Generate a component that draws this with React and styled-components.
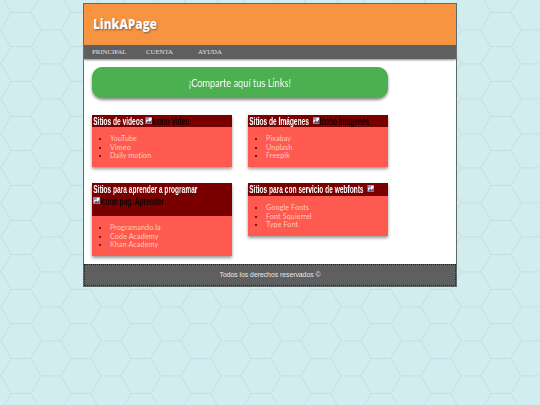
import React from "react";
import styled, { createGlobalStyle } from "styled-components";

const tile = `<svg xmlns='http://www.w3.org/2000/svg' width='60' height='34.64' viewBox='0 0 60 34.64'><g fill='none' stroke='#bfdbdf' stroke-width='0.8'><path d='M-19 29.6H1L11 12.3H31L41 29.6H61L71 12.3'/><path d='M1 29.6L11 46.9M41 29.6L31 46.9M1 -5L11 12.3M41 -5L31 12.3M61 -5L71 12.3'/></g></svg>`;

const Global = createGlobalStyle`
  html, body { margin: 0; padding: 0; }
  body {
    min-height: 405px;
    background-color: #d2edf0;
    background-image: url("data:image/svg+xml,${encodeURIComponent(tile)}");
    background-size: 60px 34.64px;
    overflow: hidden;
  }
`;

const Page = styled.div`
  width: 374px;
  margin: 3px 0 0 83px;
  border: 1px solid #5d6a6a;
  background: #fff;
  box-sizing: border-box;
`;
const Header = styled.header`
  height: 41px;
  background: #f79442;
  display: flex;
  align-items: center;
  padding: 0 0 0 9px;
`;
const Logo = styled.h1`
  margin: 0;
  font: 800 13.5px/1 "Open Sans", sans-serif;
  color: #fff;
  text-shadow: 1px 1px 2px #7a5a3a;
  transform: scaleX(0.87);
  transform-origin: left center;
  will-change: transform;
`;
const Nav = styled.nav`
  height: 14px;
  background: #5f5f5f;
  box-shadow: 0 1px 2px #888;
  display: flex;
  align-items: center;
  padding-left: 8px;
`;
const NavLink = styled.a`
  font: 6.8px/14px "Liberation Serif", serif;
  color: #e0e0e0;
  width: ${(p) => p.$w}px;
`;
const Main = styled.main`
  padding: 8px 68px 0 8px;
  height: 205px;
  box-sizing: border-box;
`;
const Banner = styled.div`
  height: 31px;
  border-radius: 10px;
  background: #4caf50;
  box-shadow: 0 2px 3px #8a8a8a;
  display: flex;
  align-items: center;
  justify-content: center;
`;
const BannerText = styled.span`
  display: inline-block;
  font: 11.5px/1 "Lato", sans-serif;
  color: #fff;
  white-space: nowrap;
  transform: scaleX(0.8);
  will-change: transform;
`;
const Grid = styled.div`
  margin-top: 17px;
  display: grid;
  grid-template-columns: 140px 140px;
  column-gap: 16px;
  row-gap: 16.5px;
  align-items: start;
`;
const Card = styled.section`
  background: #ff5a4f;
  box-shadow: 0 2px 3px #999;
`;
const CardHead = styled.div`
  background: #7a0000;
  height: ${(p) => p.$h}px;
  overflow: hidden;
`;
const HeadText = styled.h2`
  margin: 0;
  width: 233px;
  padding-left: 2px;
  box-sizing: border-box;
  transform: scaleX(0.6);
  transform-origin: left top;
  will-change: transform;
  font: 700 11px/12px "Liberation Sans", sans-serif;
  color: #fff;
`;
const Alt = styled.span`
  color: #140000;
`;
const Broken = styled.svg`
  width: 11.5px;
  height: 7px;
  margin-left: ${(p) => p.$ml}px;
  vertical-align: 1px;
`;
const List = styled.ul`
  margin: 0;
  padding: 8px 0 6px 18px;
  list-style: disc;
  font: 7.2px/8.5px "Lato", sans-serif;
  letter-spacing: 0.1px;
`;
const Item = styled.li`
  color: #3a0a06;
`;
const ItemLink = styled.a`
  color: #ffc9c2;
`;
const Footer = styled.footer`
  height: 22px;
  box-sizing: border-box;
  background: #5f5f5f;
  border: 1px dotted #222;
  display: flex;
  align-items: center;
  justify-content: center;
  font: 6.8px/1 "Liberation Sans", sans-serif;
  color: #e8e8e8;
`;

const BrokenIcon = ({ ml = 0 }) => (
  <Broken $ml={ml} viewBox="0 0 10 10" preserveAspectRatio="none">
    <rect x="0.5" y="0.5" width="9" height="9" fill="#fff" stroke="#8a8a8a" strokeWidth="1" />
    <path d="M1 9L4 4.5L6 7L9 4V9Z" fill="#6a4a6a" />
    <rect x="1" y="1" width="4" height="3" fill="#7a8ad0" />
  </Broken>
);

const cards = [
  { title: "Sitios de videos", alt: "Icono Video", ml: 3, h: 12, items: ["YouTube", "Vimeo", "Daily motion"] },
  { title: "Sitios de Imágenes", alt: "Icono Imagenes", ml: 6, h: 12, items: ["Pixabay", "Unplash", "Freepik"] },
  { title: "Sitios para aprender a programar", alt: "Icono pag. Aprender", ml: 0, h: 33, tall: true, items: ["Programando.la", "Code Academy", "Khan Academy"] },
  { title: "Sitios para con servicio de webfonts", alt: "", ml: 6, h: 13, items: ["Google Fonts", "Font Squierrel", "Type Font"] },
];

export default function App() {
  return (
    <>
      <Global />
      <Page>
        <Header><Logo>LinkAPage</Logo></Header>
        <Nav>
          <NavLink $w={54}>PRINCIPAL</NavLink>
          <NavLink $w={52}>CUENTA</NavLink>
          <NavLink $w={40}>AYUDA</NavLink>
        </Nav>
        <Main>
          <Banner><BannerText>¡Comparte aquí tus Links!</BannerText></Banner>
          <Grid>
            {cards.map((c) => (
              <Card key={c.title}>
                <CardHead $h={c.h}>
                  <HeadText>
                    {c.title}
                    {c.tall && <br />}
                    <BrokenIcon ml={c.ml} />
                    <Alt>{c.alt}</Alt>
                  </HeadText>
                </CardHead>
                <List>
                  {c.items.map((i) => (
                    <Item key={i}><ItemLink>{i}</ItemLink></Item>
                  ))}
                </List>
              </Card>
            ))}
          </Grid>
        </Main>
        <Footer>Todos los derechos reservados ©</Footer>
      </Page>
    </>
  );
}
